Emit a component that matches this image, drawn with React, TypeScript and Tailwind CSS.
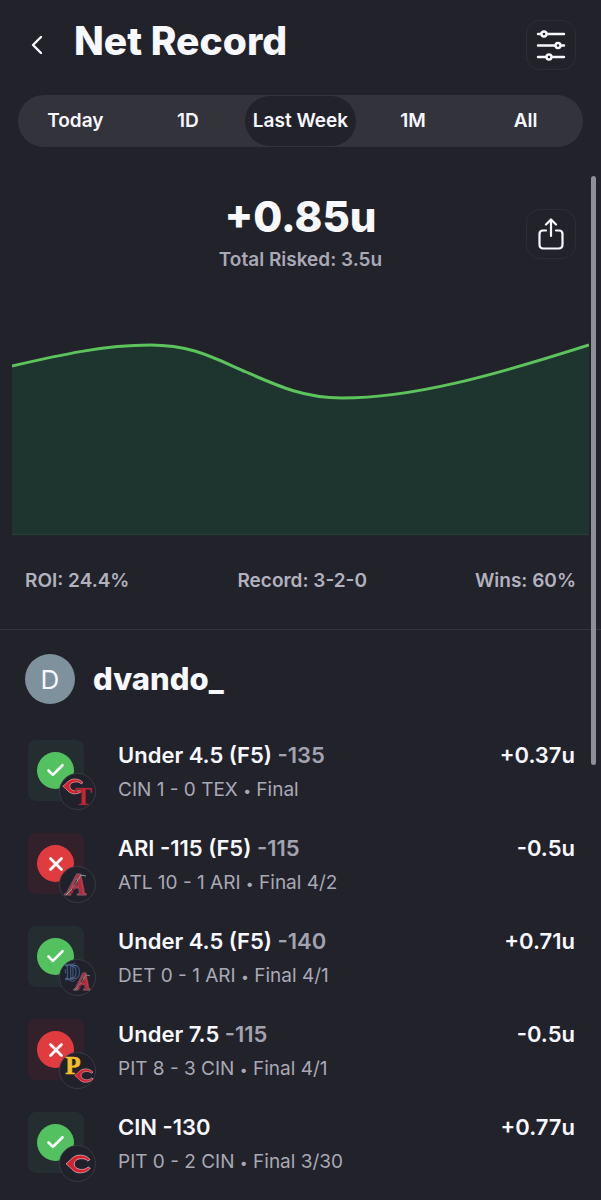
import React, { useState } from 'react';
import { Check, X } from 'lucide-react';

type Team = 'CIN' | 'TEX' | 'ARI' | 'DET' | 'PIT';

interface Bet {
  pick: string;
  odds?: string;
  score: string;
  status: string;
  units: string;
  won: boolean;
  teams: Team[];
}

const ranges = ['Today', '1D', 'Last Week', '1M', 'All'];

const bets: Bet[] = [
  { pick: 'Under 4.5 (F5)', odds: '-135', score: 'CIN 1 - 0 TEX', status: 'Final', units: '+0.37u', won: true, teams: ['CIN', 'TEX'] },
  { pick: 'ARI -115 (F5)', odds: '-115', score: 'ATL 10 - 1 ARI', status: 'Final 4/2', units: '-0.5u', won: false, teams: ['ARI'] },
  { pick: 'Under 4.5 (F5)', odds: '-140', score: 'DET 0 - 1 ARI', status: 'Final 4/1', units: '+0.71u', won: true, teams: ['DET', 'ARI'] },
  { pick: 'Under 7.5', odds: '-115', score: 'PIT 8 - 3 CIN', status: 'Final 4/1', units: '-0.5u', won: false, teams: ['PIT', 'CIN'] },
  { pick: 'CIN -130', score: 'PIT 0 - 2 CIN', status: 'Final 3/30', units: '+0.77u', won: true, teams: ['CIN'] },
];

// every mark is drawn in a box about 26 wide
const TeamMark: React.FC<{ team: Team }> = ({ team }) => {
  switch (team) {
    case 'CIN':
      return (
        <path
          d="M25 5.5C22 1.8 17.5 .8 13 1.3C8 1.9 5.5 6.5 1 9.8C5.5 13 8 18 13 18.7C17.5 19.2 22.5 18 25.3 14.2L23.2 13C21 15 18.5 15.8 15.5 15.4C11.8 14.9 9.3 12.8 9.3 9.9C9.3 7 11.8 5 15.5 4.7C18.5 4.4 21 5 22.8 7Z"
          fill="#d5202f"
          stroke="#e9c9ce"
          strokeWidth="0.7"
        />
      );
    case 'TEX':
      return (
        <text
          x="1"
          y="21"
          fontSize="34"
          fill="#c8262c"
          stroke="#6b2a4d"
          strokeWidth="0.5"
          className="font-['Liberation_Serif',serif] font-bold"
        >
          T
        </text>
      );
    case 'ARI':
      return (
        <g>
          <text
            x="1"
            y="20"
            fontSize="32"
            fill="#c2263b"
            stroke="#8a5560"
            strokeWidth="1"
            className="font-['Liberation_Serif',serif] font-bold italic"
          >
            A
          </text>
          <path d="M1 20L7 14L11 8L16 0L21 1" fill="none" stroke="#78aaa9" strokeWidth="1" />
          <path d="M6 18L9 13L13 7" fill="none" stroke="#b5273a" strokeWidth="2.6" strokeDasharray="3 1" />
        </g>
      );
    case 'DET':
      return (
        <g>
          <text
            x="4"
            y="18"
            fontSize="25"
            fill="#12213e"
            stroke="#596e96"
            strokeWidth="0.9"
            className="font-['Liberation_Serif',serif] font-bold"
          >
            D
          </text>
          <path d="M5 3C8 -2 12 2 16 -1M4 6V11M4 20C8 15 11 24 16 19M13 2V17" fill="none" stroke="#596e96" strokeWidth="0.9" />
        </g>
      );
    case 'PIT':
      return (
        <text
          x="4"
          y="20"
          fontSize="30"
          fill="#f2bf2b"
          stroke="#f2bf2b"
          strokeWidth="0.6"
          className="font-['Liberation_Serif',serif] font-bold"
        >
          P
        </text>
      );
  }
};

const TeamBadge: React.FC<{ teams: Team[] }> = ({ teams }) => (
  <span className="absolute top-[33px] left-[31px] h-[37px] w-[37px] rounded-full border border-[#373b43] bg-[#20212a]">
    <svg viewBox="0 0 35 35" className="h-full w-full overflow-visible" aria-hidden="true">
      {teams.length === 1 ? (
        <g transform="translate(5 8)">
          <TeamMark team={teams[0]} />
        </g>
      ) : (
        <>
          <g transform="translate(2 4) scale(0.84)">
            <TeamMark team={teams[0]} />
          </g>
          <g transform="translate(14 15) scale(0.76)">
            <TeamMark team={teams[1]} />
          </g>
        </>
      )}
    </svg>
  </span>
);

const BetRow: React.FC<{ bet: Bet }> = ({ bet }) => (
  <li className="flex h-16 items-start pr-[26px] pl-7">
    <div className={`relative h-[61px] w-14 shrink-0 rounded-lg ${bet.won ? 'bg-[#242d30]' : 'bg-[#32212b]'}`}>
      <span
        className={`absolute top-3 left-[9px] flex h-[37px] w-[37px] items-center justify-center rounded-full text-white ${
          bet.won ? 'bg-[#54c160]' : 'bg-[#e03c40]'
        }`}
      >
        {bet.won ? <Check size={21} strokeWidth={3} /> : <X size={22} strokeWidth={3} />}
      </span>
      <TeamBadge teams={bet.teams} />
    </div>
    <div className="ml-[34px] min-w-0 flex-1">
      <p className="text-[22px] leading-[30px] font-semibold">
        {bet.pick}
        {bet.odds && <span className="text-[#a3a3b0]"> {bet.odds}</span>}
      </p>
      <p className="mt-1.5 text-[19px] leading-7 text-[#a9a9b6]">
        {bet.score} <span className="text-sm">•</span> {bet.status}
      </p>
    </div>
    <p className="text-[22px] leading-[30px] font-semibold">{bet.units}</p>
  </li>
);

export default function App() {
  const [range, setRange] = useState('Last Week');

  return (
    <main className="relative min-h-screen overflow-hidden bg-[#22222b] font-['Inter',sans-serif] text-[#f8f8ff]">
      <header className="flex items-center pt-5 pr-[25px] pl-6">
        <button type="button" aria-label="Back" className="flex h-[50px] w-[26px] items-center justify-center">
          <svg width="14" height="20" viewBox="0 0 14 20" fill="none" stroke="currentColor" strokeWidth="2.4" strokeLinecap="round" strokeLinejoin="round">
            <path d="M11 2L3 10L11 18" />
          </svg>
        </button>
        <h1 className="ml-6 flex-1 pb-2 text-[39px] leading-[42px] font-extrabold">Net Record</h1>
        <button type="button" aria-label="Filters" className="flex h-[50px] w-[50px] items-center justify-center rounded-[14px] border border-[#2d2d37]">
          <svg width="30" height="32" viewBox="0 0 30 32" fill="none" stroke="currentColor" strokeWidth="2.4" strokeLinecap="round">
            <path d="M2 5H5M11 5H28M2 16.5H19M25 16.5H28M2 28H10M16 28H28" />
            <circle cx="8" cy="5" r="2.5" />
            <circle cx="22" cy="16.5" r="2.5" />
            <circle cx="13" cy="28" r="2.5" />
          </svg>
        </button>
      </header>

      <nav className="mx-[18px] mt-[25px] flex rounded-[26px] bg-[#33333c] p-px">
        {ranges.map((r) => (
          <button
            key={r}
            type="button"
            aria-pressed={r === range}
            onClick={() => setRange(r)}
            className={`mx-px h-[50px] flex-1 basis-0 rounded-[25px] text-[19px] font-semibold whitespace-nowrap ${
              r === range ? 'bg-[#22222b]' : ''
            }`}
          >
            {r}
          </button>
        ))}
      </nav>

      <section>
        <div className="relative pt-[45px] text-center">
          <p className="text-[42px] leading-[50px] font-extrabold">+0.85u</p>
          <p className="mt-1 text-[19px] leading-7 font-semibold text-[#a9a9b6]">Total Risked: 3.5u</p>
          <button
            type="button"
            aria-label="Share"
            className="absolute top-[62px] right-[25px] flex h-[50px] w-[50px] items-center justify-center rounded-[14px] border border-[#2d2d37]"
          >
            <svg width="28" height="32" viewBox="0 0 28 32" fill="none" stroke="currentColor" strokeWidth="2.2" strokeLinecap="round" strokeLinejoin="round">
              <path d="M9 12.5H6Q2.5 12.5 2.5 16V26.5Q2.5 30.5 6.5 30.5H21.5Q25.5 30.5 25.5 26.5V16Q25.5 12.5 22 12.5H19" />
              <path d="M14 18V2M9 6.5L14 1.5L19 6.5" />
            </svg>
          </button>
        </div>

        <svg viewBox="0 0 577 196" preserveAspectRatio="none" className="mt-[66px] block h-[196px] w-full px-3" aria-hidden="true">
          <path d="M0 26C48 15 92 5 138 5C180 5 202 18 234 32C266 46 292 58 330 58C400 58 480 36 577 5V195H0Z" fill="#1d352e" />
          <path d="M0 194.5H577" stroke="#263d37" strokeWidth="1.5" />
          <path
            d="M0 26C48 15 92 5 138 5C180 5 202 18 234 32C266 46 292 58 330 58C400 58 480 36 577 5"
            fill="none"
            stroke="#5dc35c"
            strokeWidth="3"
          />
        </svg>

        <div className="flex justify-between px-[25px] pt-[31px] pb-[34px] text-[19px] leading-7 font-semibold text-[#b2b2be]">
          <span>ROI: 24.4%</span>
          <span>Record: 3-2-0</span>
          <span>Wins: 60%</span>
        </div>
      </section>

      <section className="border-t border-[#35353f]">
        <div className="flex items-center gap-[18px] px-[25px] pt-6">
          <span className="flex h-[50px] w-[50px] items-center justify-center rounded-full bg-[#7e919d] text-[26px]">D</span>
          <h2 className="text-[31px] leading-10 font-extrabold">dvando_</h2>
        </div>
        <ul className="mt-9 flex flex-col gap-[29px]">
          {bets.map((bet, i) => (
            <BetRow key={i} bet={bet} />
          ))}
        </ul>
      </section>

      {/* Scroll indicator */}
      <div className="absolute top-44 right-[5px] h-[589px] w-[5px] rounded-full bg-[#8f8f96]" />
    </main>
  );
}
